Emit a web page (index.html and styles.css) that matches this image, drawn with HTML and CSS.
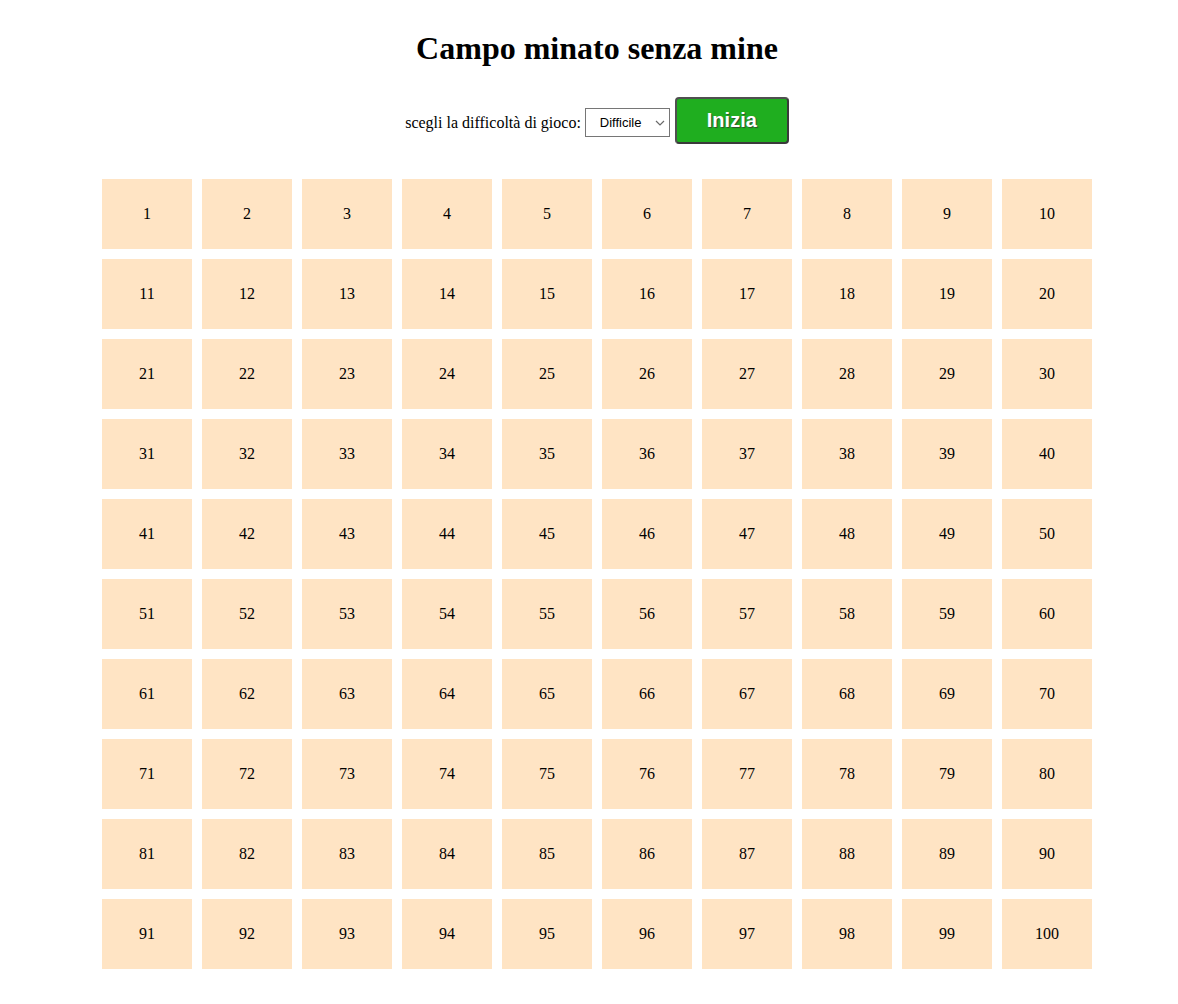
FILE: index.html
```html
<!DOCTYPE html>
<html lang="it">
<head>
<meta charset="utf-8">
<title>Campo minato</title>
<link rel="stylesheet" href="styles.css">
</head>
<body>
<div class="page">
  <h1 class="title">Campo minato senza mine</h1>
  <div class="controls">
    <label class="label" for="level">scegli la difficoltà di gioco:</label>
    <span class="select-wrap">
      <select id="level" class="level">
        <option>Facile</option>
        <option>Medio</option>
        <option selected>Difficile</option>
      </select>
      <svg class="chev" width="10" height="6" viewBox="0 0 10 6"><path d="M1 1 L5 5 L9 1" fill="none" stroke="#6a6a6a" stroke-width="1.2"/></svg>
    </span>
    <button class="start">Inizia</button>
  </div>
  <div class="grid" id="grid"></div>
</div>
<script src="script.js"></script>
</body>
</html>
```
FILE: script.js
```js
var g = document.getElementById('grid');
for (var i = 1; i <= 100; i++) {
  var c = document.createElement('div');
  c.className = 'cell';
  c.textContent = i;
  g.appendChild(c);
}
```
FILE: styles.css
```css
html, body {
  margin: 0;
  padding: 0;
  background: #fff;
}
body {
  font-family: "Liberation Serif", "Times New Roman", serif;
  color: #000;
}
.page {
  padding: 9px 0 8px 16px;
}
.title {
  font-size: 32px;
  font-weight: bold;
  text-align: center;
  margin: 21px 0 0;
  line-height: 37px;
}
.controls {
  display: flex;
  justify-content: center;
  align-items: center;
  margin-top: 30px;
  font-size: 16px;
}
.label {
  margin-right: 4px;
  margin-top: 4px;
}
.select-wrap {
  position: relative;
  display: inline-block;
  height: 29px;
  margin-top: 4px;
}
.level {
  -webkit-appearance: none;
  appearance: none;
  font-family: "Liberation Sans", Arial, sans-serif;
  font-size: 13px;
  height: 29px;
  width: 85px;
  padding: 0 0 0 14px;
  border: 1px solid #767676;
  border-radius: 0;
  background: #fff;
  color: #000;
  outline: none;
}
.chev {
  position: absolute;
  right: 5px;
  top: 12px;
  pointer-events: none;
}
.start {
  margin-left: 5px;
  width: 114px;
  height: 47px;
  background: #1fae1f;
  border: 2px solid #505050;
  border-right-color: #3a3a3a;
  border-bottom-color: #3a3a3a;
  border-radius: 4px;
  color: #fff;
  font-family: "Liberation Sans", Arial, sans-serif;
  font-weight: bold;
  font-size: 20px;
  text-shadow: 1px 1px 1px #2f4f2f;
  padding: 0;
}
.grid {
  display: grid;
  grid-template-columns: repeat(10, 90px);
  grid-auto-rows: 70px;
  gap: 10px;
  justify-content: center;
  margin-top: 35px;
}
.cell {
  background: #ffe4c4;
  display: flex;
  align-items: center;
  justify-content: center;
  font-size: 16px;
}
```
